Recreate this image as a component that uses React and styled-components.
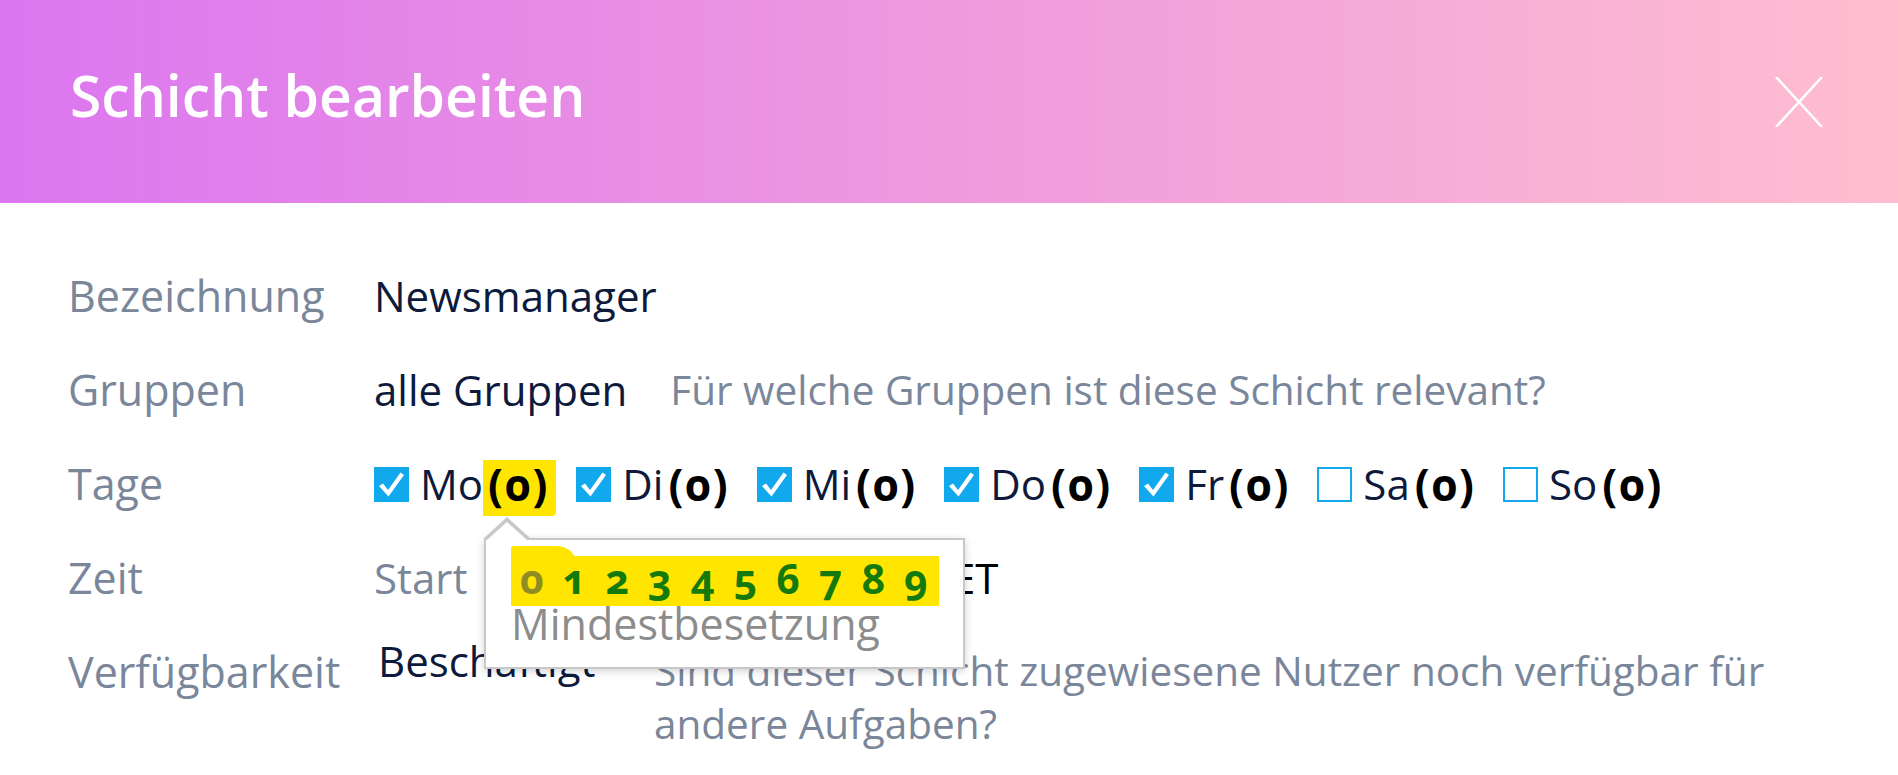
import React from "react";
import styled, { createGlobalStyle } from "styled-components";

const days = [
  { id: "mo", name: "Mo", checked: true, count: 0 },
  { id: "di", name: "Di", checked: true, count: 0 },
  { id: "mi", name: "Mi", checked: true, count: 0 },
  { id: "do", name: "Do", checked: true, count: 0 },
  { id: "fr", name: "Fr", checked: true, count: 0 },
  { id: "sa", name: "Sa", checked: false, count: 0 },
  { id: "so", name: "So", checked: false, count: 0 },
];

const digits = [0, 1, 2, 3, 4, 5, 6, 7, 8, 9];

const GlobalStyle = createGlobalStyle`
  body {
    margin: 0;
    background: #fff;
    font-family: "Open Sans", "Liberation Sans", sans-serif;
  }
`;

const Modal = styled.div`
  min-height: 100vh;
  background: #fff;
  overflow: hidden;
`;

const Header = styled.header`
  height: 203px;
  box-sizing: border-box;
  padding: 0 75px 0 70px;
  display: flex;
  align-items: center;
  justify-content: space-between;
  background: linear-gradient(90deg, #dc76f0 0%, #ee9ade 50%, #ffbed0 100%);
`;

const Title = styled.h1`
  margin: -12px 0 0;
  color: #fff;
  font-size: 57px;
  font-weight: 600;
  line-height: 1;
`;

const CloseButton = styled.button`
  width: 48px;
  height: 50px;
  padding: 0;
  border: none;
  background: transparent;
  cursor: pointer;
`;

const Form = styled.div`
  padding: 65px 0 0 68px;
  display: grid;
  row-gap: 38px;
`;

const Row = styled.div`
  display: grid;
  grid-template-columns: 306px 1fr;
  font-size: 42px;
  line-height: 56px;
`;

const Label = styled.div`
  color: #7a869a;
  font-size: 43px;
`;

const Value = styled.div`
  display: flex;
  align-items: flex-start;
  color: #0d1a3c;
`;

const Hint = styled.span`
  color: #7a869a;
  font-size: 40.5px;
  margin-left: ${(p) => p.$offset ?? 43}px;
  line-height: ${(p) => p.$lh ?? 56}px;
`;

const DayList = styled.div`
  display: flex;
  align-items: center;
  gap: 27px;
`;

const Day = styled.label`
  display: flex;
  align-items: center;
  color: #0d1a3c;
`;

const Box = styled.span`
  width: 35px;
  height: 35px;
  box-sizing: border-box;
  margin-right: 11px;
  border: 2px solid #12a8ee;
  background: ${(p) => (p.$checked ? "#12a8ee" : "#fff")};
  display: grid;
  place-items: center;
`;

const Count = styled.span`
  position: relative;
  z-index: ${(p) => (p.$active ? 5 : 0)};
  margin-left: 5px;
  font-size: 44px;
  font-weight: 700;
  letter-spacing: 2px;
  color: #000;
  font-variant-numeric: oldstyle-nums;

  &::before {
    content: "";
    position: absolute;
    z-index: -1;
    top: 4px;
    bottom: -4px;
    left: -5px;
    right: -7px;
    background: ${(p) => (p.$active ? "#ffe500" : "transparent")};
    border-radius: 0 0 4px 0;
  }
`;

const Popup = styled.div`
  position: absolute;
  z-index: 10;
  top: 82px;
  left: -4px;
  width: 481px;
  height: 131px;
  box-sizing: border-box;
  padding: 16px 24px 0 25px;
  background: #fff;
  border: 2px solid #c8c8c8;
  box-shadow: 0 2px 8px rgba(0, 0, 0, 0.18);
  font-size: 42px;
  font-weight: 400;
  letter-spacing: 0;
  cursor: default;

  &::before,
  &::after {
    content: "";
    position: absolute;
    border-style: solid;
    border-color: transparent;
  }
  &::before {
    top: -23px;
    left: -2px;
    border-width: 0 23px 21px 23px;
    border-bottom-color: #c8c8c8;
  }
  &::after {
    top: -18px;
    left: 1px;
    border-width: 0 20px 18px 20px;
    border-bottom-color: #fff;
  }
`;

const DigitStrip = styled.div`
  position: relative;
  display: flex;
  gap: 19px;
  height: 50px;
  padding: 0 0 0 9px;
  background: #ffe500;
  font-size: 41px;
  font-weight: 700;
  line-height: 44px;
  font-variant-numeric: oldstyle-nums;

  &::before {
    content: "";
    position: absolute;
    top: -10px;
    left: 0;
    width: 66px;
    height: 20px;
    background: #ffe500;
    border-radius: 8px 60px 0 0;
  }
`;

const Digit = styled.span`
  position: relative;
  color: ${(p) => (p.$current ? "#8f8c24" : "#157a0c")};
`;

const PopupText = styled.div`
  margin-top: -4px;
  color: #8c8c8c;
  font-size: 43px;
  line-height: 44px;
`;

const TimeLabel = styled.span`
  color: #7a869a;
`;

const TimeInput = styled.span`
  width: 410px;
  margin: 0 24px;
  color: #0d1a3c;
`;

const Zone = styled.span`
  color: #000;
`;

const Select = styled.div`
  width: 276px;
  margin: -11px 0 0 4px;
  color: #0d1a3c;
`;

const CloseIcon = () => (
  <svg width="48" height="50" viewBox="0 0 48 50">
    <path d="M1 0 L47 50 M47 0 L1 50" stroke="#fff" strokeWidth="2.5" fill="none" />
  </svg>
);

const CheckIcon = () => (
  <svg width="31" height="31" viewBox="0 0 31 31">
    <path d="M3 17 L7 14.5 L12 21 L24.5 3.5 L28 6 L12.5 27.5 Z" fill="#fff" />
  </svg>
);

const App = () => {
  const [selected, setSelected] = React.useState(
    Object.fromEntries(days.map((d) => [d.id, d.checked]))
  );

  return (
    <Modal>
      <GlobalStyle />
      <Header>
        <Title>Schicht bearbeiten</Title>
        <CloseButton aria-label="Schließen">
          <CloseIcon />
        </CloseButton>
      </Header>

      <Form>
        <Row>
          <Label>Bezeichnung</Label>
          <Value>Newsmanager</Value>
        </Row>

        <Row>
          <Label>Gruppen</Label>
          <Value>
            alle Gruppen
            <Hint>Für welche Gruppen ist diese Schicht relevant?</Hint>
          </Value>
        </Row>

        <Row>
          <Label>Tage</Label>
          <DayList>
            {days.map((day, i) => (
              <Day
                key={day.id}
                onClick={() => setSelected({ ...selected, [day.id]: !selected[day.id] })}
              >
                <Box $checked={selected[day.id]}>{selected[day.id] && <CheckIcon />}</Box>
                {day.name}
                <Count $active={i === 0}>
                  ({day.count})
                  {i === 0 && (
                    <Popup>
                      <DigitStrip>
                        {digits.map((n) => (
                          <Digit key={n} $current={n === day.count}>
                            {n}
                          </Digit>
                        ))}
                      </DigitStrip>
                      <PopupText>Mindestbesetzung</PopupText>
                    </Popup>
                  )}
                </Count>
              </Day>
            ))}
          </DayList>
        </Row>

        <Row>
          <Label>Zeit</Label>
          <Value>
            <TimeLabel>Start</TimeLabel>
            <TimeInput>08:00</TimeInput>
            <Zone>CET</Zone>
          </Value>
        </Row>

        <Row>
          <Label>Verfügbarkeit</Label>
          <Value>
            <Select>Beschäftigt</Select>
            <Hint $offset={0} $lh={53}>
              Sind dieser Schicht zugewiesene Nutzer noch verfügbar für
              <br />
              andere Aufgaben?
            </Hint>
          </Value>
        </Row>
      </Form>
    </Modal>
  );
};

export default App;
